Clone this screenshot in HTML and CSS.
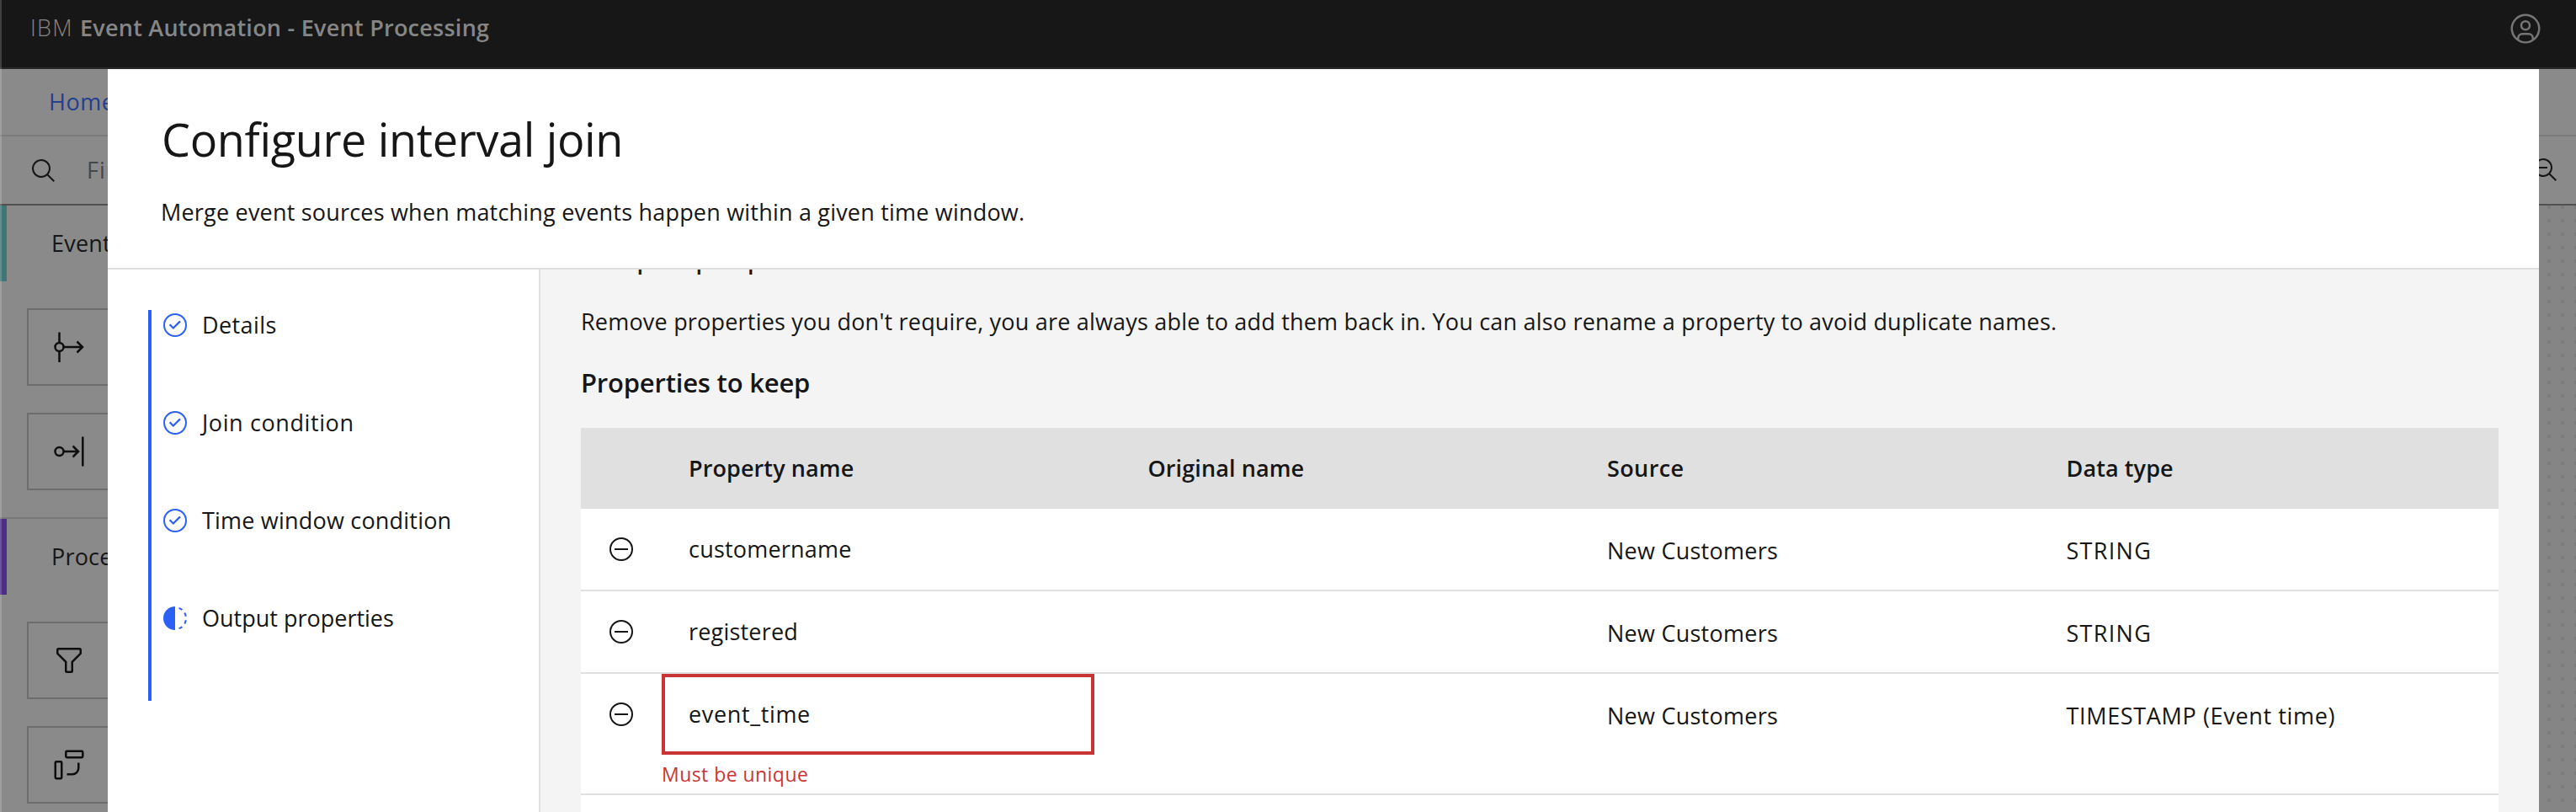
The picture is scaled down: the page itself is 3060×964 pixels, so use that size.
FILE: index.html
```html
<!DOCTYPE html>
<html lang="en">
<head>
<meta charset="utf-8">
<title>Event Processing</title>
<link rel="stylesheet" href="styles.css">
</head>
<body>
<svg class="defs" width="0" height="0">
  <symbol id="check" viewBox="0 0 32 32">
    <circle cx="16" cy="16" r="13" fill="none" stroke="currentColor" stroke-width="2"/>
    <path d="M14 21.4 9 16.4 10.6 15 14 18.4 21.4 11 23 12.6z" fill="currentColor" transform="translate(-.2 -.4)"/>
  </symbol>
  <symbol id="minus" viewBox="0 0 32 32">
    <circle cx="16" cy="16" r="13" fill="none" stroke="currentColor" stroke-width="2"/>
    <path d="M8 15h16v2H8z" fill="currentColor"/>
  </symbol>
</svg>

<div class="app">
  <header class="topbar">
    <div class="brand"><span class="brand-ibm">IBM</span><span class="brand-name">Event Automation - Event Processing</span></div>
    <svg class="avatar" viewBox="0 0 32 32" fill="currentColor"><path d="M16 8a5 5 0 1 0 5 5 5 5 0 0 0-5-5Zm0 8a3 3 0 1 1 3-3 3 3 0 0 1-3 3Z"/><path d="M16 2A14 14 0 1 0 30 16 14.016 14.016 0 0 0 16 2ZM10 26.3765V25a3.003 3.003 0 0 1 3-3h6a3.003 3.003 0 0 1 3 3v1.3765a11.899 11.899 0 0 1-12 0Zm13.9925-1.4507A5.0016 5.0016 0 0 0 19 20H13a5.0016 5.0016 0 0 0-4.9925 4.9258 12 12 0 1 1 15.985 0Z"/></svg>
  </header>
  <nav class="crumbs"><a class="crumb">Home</a></nav>
  <div class="toolbar">
    <svg class="search" viewBox="0 0 32 32" fill="currentColor"><path d="M29 27.586l-7.552-7.552a11.018 11.018 0 1 0-1.414 1.414L27.586 29ZM4 13a9 9 0 1 1 9 9 9.01 9.01 0 0 1-9-9Z"/></svg>
    <span class="placeholder">Find</span>
    <svg class="zoom-out" viewBox="0 0 32 32" fill="currentColor"><path d="M29 27.586l-7.552-7.552a11.018 11.018 0 1 0-1.414 1.414L27.586 29ZM4 13a9 9 0 1 1 9 9 9.01 9.01 0 0 1-9-9Z"/><path d="M8 12h10v2H8z"/></svg>
  </div>
  <div class="workspace">
    <aside class="palette">
      <h2 class="group group-events">Events</h2>
      <div class="nodes">
        <div class="node"><svg class="node-icon" viewBox="0 0 40 40"><path d="M8.5 2.5v13M8.5 25v13M13.5 20H36M29.5 13.5 36 20l-6.500 6.500"/><circle cx="8.500" cy="20" r="5"/></svg></div>
        <div class="node"><svg class="node-icon" viewBox="0 0 40 40"><path d="M13.500 20H31M24.500 13.500 31 20l-6.500 6.500M36.300 2.500v35"/><circle cx="8.500" cy="20" r="5"/></svg></div>
      </div>
      <h2 class="group group-processors">Processors</h2>
      <div class="nodes">
        <div class="node"><svg class="node-icon" viewBox="0 0 40 40"><path d="M7.500 6.250H32.500a1.250 1.250 0 0 1 1.250 1.250V11.800L23.750 21.800V32.500a1.250 1.250 0 0 1-1.250 1.250H17.500a1.250 1.250 0 0 1-1.250-1.250V21.800L6.250 11.800V7.500a1.250 1.250 0 0 1 1.250-1.250z"/></svg></div>
        <div class="node"><svg class="node-icon" viewBox="0 0 40 40"><rect x="16.300" y="3.750" width="20" height="7.500" rx="1.200"/><rect x="3.750" y="16.250" width="7.500" height="20" rx="1.200"/><path d="M17.500 31.300h6.300a7.500 7.500 0 0 0 7.500-7.500V17.500"/></svg></div>
      </div>
    </aside>
    <div class="canvas"></div>
  </div>
</div>
<div class="edge"></div>

<section class="modal">
  <header class="modal-head">
    <h1 class="modal-title">Configure interval join</h1>
    <p class="modal-sub">Merge event sources when matching events happen within a given time window.</p>
  </header>
  <div class="modal-body">
    <nav class="steps">
      <ol class="step-list">
        <li class="step"><svg class="step-icon"><use href="#check"/></svg><span class="step-text t4">Details</span></li>
        <li class="step"><svg class="step-icon"><use href="#check"/></svg><span class="step-text t6">Join condition</span></li>
        <li class="step"><svg class="step-icon"><use href="#check"/></svg><span class="step-text">Time window condition</span></li>
        <li class="step"><svg class="step-icon" viewBox="0 0 32 32" fill="currentColor"><path d="M23.764 6.859l1.285-1.531A13.976 13.976 0 0 0 20.867 2.887l-.683 1.878A11.973 11.973 0 0 1 23.764 6.859zM27.81 14l1.968-.413A13.889 13.889 0 0 0 28.14 9.046L26.409 10A12.52 12.52 0 0 1 27.81 14zM20.184 27.235l.683 1.878a13.976 13.976 0 0 0 4.182-2.441l-1.285-1.531A11.973 11.973 0 0 1 20.184 27.235zM26.409 22L28.14 23a14.14 14.14 0 0 0 1.638-4.587L27.81 18.066A12.152 12.152 0 0 1 26.409 22zM16 30V2a14 14 0 0 0 0 28z"/></svg><span class="step-text t0">Output properties</span></li>
      </ol>
    </nav>
    <main class="content">
      <h2 class="content-title">Output properties</h2>
      <p class="content-text">Remove properties you don't require, you are always able to add them back in. You can also rename a property to avoid duplicate names.</p>
      <h3 class="content-sub">Properties to keep</h3>
      <div class="table">
        <div class="row row-head">
          <span></span><span class="th">Property name</span><span class="th">Original name</span><span class="th t4">Source</span><span class="th">Data type</span>
        </div>
        <div class="row">
          <svg class="remove"><use href="#minus"/></svg>
          <div class="name">customername</div><span></span><span class="td">New Customers</span><span class="td caps">STRING</span>
        </div>
        <div class="row">
          <svg class="remove"><use href="#minus"/></svg>
          <div class="name">registered</div><span></span><span class="td">New Customers</span><span class="td caps">STRING</span>
        </div>
        <div class="row row-error">
          <svg class="remove"><use href="#minus"/></svg>
          <div class="field"><div class="name name-invalid">event_time</div><p class="error">Must be unique</p></div><span></span><span class="td">New Customers</span><span class="td t7">TIMESTAMP (Event time)</span>
        </div>
        <div class="row"></div>
      </div>
    </main>
  </div>
</section>
</body>
</html>
```
FILE: styles.css
```css
* { box-sizing: border-box; margin: 0; padding: 0; }
html, body { width: 3060px; height: 964px; overflow: hidden; }
body {
  position: relative;
  font: 400 27px/37px "Open Sans", "Noto Sans", sans-serif;
  letter-spacing: .2px;
  color: #161616;
  background: #8a8a8a;
}
svg { display: block; flex: none; }
.defs { position: absolute; }

/* Dimmed application behind the dialog */
.app { display: flex; flex-direction: column; height: 964px; }
.topbar {
  display: flex; justify-content: space-between;
  height: 82px; padding: 14px 40px 0 36px;
  background: #171717; border-bottom: 2px solid #2a2828;
  color: #868686;
}
.brand { display: flex; gap: 8px; }
.brand-ibm { font-weight: 300; letter-spacing: 1.300px; }
.brand-name { font-weight: 600; letter-spacing: .25px; }
.avatar { width: 40px; height: 40px; color: #757575; }
.crumbs { height: 80px; padding: 20px 0 0 58px; border-bottom: 2px solid #7b7b7b; }
.crumb { color: #253f90; letter-spacing: .5px; }
.toolbar {
  display: flex; height: 82px; padding: 21px 20px 0 36px;
  border-bottom: 2px solid #525050;
}
.search { width: 32px; height: 32px; margin-top: 4px; }
.placeholder { margin-left: 35px; letter-spacing: 1px; color: #464646; }
.zoom-out { width: 32px; height: 32px; margin: 3px 0 0 auto; }
.workspace { display: flex; flex: 1; min-height: 0; }
.palette { width: 512px; flex: none; overflow: hidden; }
.group {
  height: 90px; padding: 26px 0 0 53px;
  font-size: 27px; font-weight: 400; border-left: 8px solid;
}
.group-events { border-color: #407776; }
.group-processors { border-color: #4c2e86; }
/* Border colours above belong to the accent bar, the label keeps the text colour */
.nodes { display: flex; flex-direction: column; gap: 32px; padding: 32px; }
.group-events + .nodes { border-bottom: 2px solid #787878; }
.node { height: 92px; padding: 24px 28px; border: 2px solid #6e6e6e; }
.node-icon { width: 40px; height: 40px; fill: none; stroke: #0e0e0e; stroke-width: 2.500px; }
.canvas {
  flex: 1;
  background: radial-gradient(circle at 8px 8px, #7b7b7b 2px, transparent 2.400px) 2508px 10px / 16px 16px #858585;
}
.edge { position: absolute; left: 0; top: 0; width: 2px; height: 964px; background: rgba(255, 255, 255, .18); }

/* Dialog */
.modal {
  position: absolute; left: 128px; top: 82px; width: 2888px; height: 882px;
  display: flex; flex-direction: column; overflow: hidden; background: #fff;
}
.modal-head { height: 238px; padding: 46px 64px 0; border-bottom: 2px solid #e0e0e0; flex: none; }
.modal-title { font-size: 54px; line-height: 74px; font-weight: 400; letter-spacing: -.35px; }
.modal-sub { margin-top: 31px; margin-left: -1px; }
.modal-body { display: flex; flex: 1; min-height: 0; }
.steps { width: 512px; padding: 48px 0 0 48px; flex: none; }
.step-list { list-style: none; border-left: 4px solid #2b60f6; }
.step { display: flex; gap: 16px; height: 116px; padding: 2px 0 0 12px; }
.step-icon { width: 32px; height: 32px; color: #2b60f6; }
.step-text { margin-top: -3px; }
.t0 { letter-spacing: 0; }
.t4 { letter-spacing: .4px; }
.t6 { letter-spacing: .6px; }
.t7 { letter-spacing: .7px; }

.content { flex: 1; padding: 0 48px; border-left: 2px solid #e0e0e0; background: #f4f4f4; overflow: hidden; }
.content-title { margin-top: -44px; margin-left: -1px; font-size: 38px; line-height: 52px; font-weight: 400; letter-spacing: 0; }
.content-text { margin-top: 35px; }
.content-sub { margin: 33px 0; font-size: 31px; line-height: 42px; font-weight: 600; letter-spacing: -.2px; }
.table { width: 2278px; background: #fff; }
.row {
  display: grid; grid-template-columns: 96px repeat(4, 545.5px);
  height: 98px; border-bottom: 2px solid #e0e0e0;
}
.row-head { height: 96px; background: #e0e0e0; border: 0; }
.th { padding: 29px 0 0 32px; font-weight: 600; letter-spacing: .1px; }
.th.t4 { letter-spacing: .4px; }
.td { padding: 31px 0 0 32px; letter-spacing: .25px; }
.caps { letter-spacing: 1.300px; }
.td.t7 { letter-spacing: .65px; }
.remove { width: 32px; height: 32px; margin: 32px; }
.name { width: 514px; height: 96px; padding: 29px 0 0 32px; letter-spacing: .2px; }
.row-error { height: 144px; }
.name-invalid { padding: 25px 0 0 28px; border: 4px solid #c93535; letter-spacing: .65px; }
.error { margin-top: 7px; font-size: 23px; line-height: 32px; letter-spacing: .45px; color: #c93535; }
```
